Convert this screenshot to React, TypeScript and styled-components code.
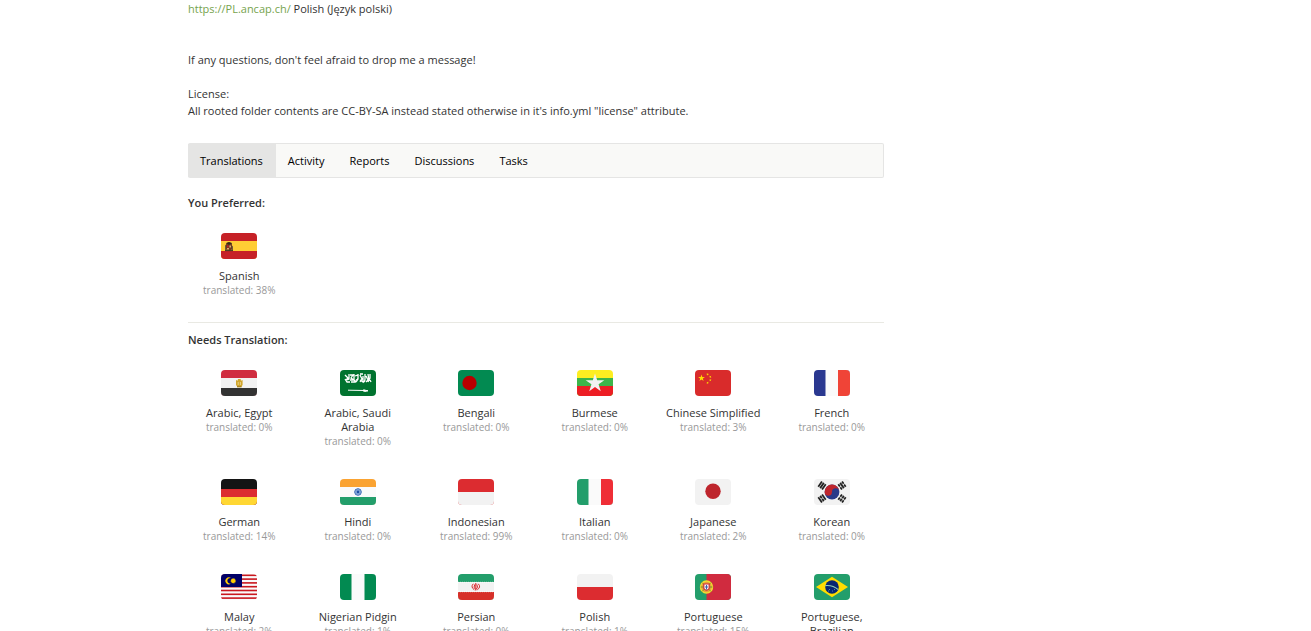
import React from "react";
import styled, { createGlobalStyle } from "styled-components";

const GlobalStyle = createGlobalStyle`
  body {
    margin: 0;
    background: #fff;
    color: #333;
    font: 11px/17px "Open Sans", "Noto Sans", sans-serif;
  }
`;

const Page = styled.div`
  max-width: 935px;
  margin: 0 auto;
  display: grid;
  grid-template-columns: minmax(0, 696px);
`;

const Main = styled.main`
  display: flex;
  flex-direction: column;
`;

const Description = styled.div`
  display: flex;
  flex-direction: column;
  gap: 17px;
  padding-bottom: 24px;
`;

const Paragraph = styled.p<{ $spaced?: boolean }>`
  margin: 0;
  padding-bottom: ${(p) => (p.$spaced ? "17px" : "0")};
`;

const SiteLink = styled.a`
  color: #76a34d;
  text-decoration: none;
`;

const TabBar = styled.nav`
  display: flex;
  background: #f9f9f7;
  border: 1px solid #e5e5e4;
  border-left: 0;
  border-radius: 2px;
`;

const Tab = styled.button<{ $active?: boolean }>`
  border: 0;
  margin: 0;
  padding: 8px 13px 8px 12px;
  font: inherit;
  color: #000;
  background: ${(p) => (p.$active ? "#e5e5e4" : "transparent")};
  cursor: pointer;
`;

const Section = styled.section<{ $divided?: boolean }>`
  padding: ${(p) => (p.$divided ? "8px 0 25px" : "16px 0 25px")};
  border-top: ${(p) => (p.$divided ? "1px solid #e9e9e3" : "0")};
`;

const SectionTitle = styled.h2`
  margin: 0 0 22px;
  font-size: 11px;
  line-height: 17px;
  font-weight: 600;
`;

const LanguageGrid = styled.ul`
  list-style: none;
  margin: 0;
  padding: 0 1px 0 0;
  display: grid;
  grid-template-columns: repeat(6, minmax(0, 1fr));
  column-gap: 16px;
  row-gap: 31px;
`;

const LanguageLink = styled.a`
  display: flex;
  flex-direction: column;
  align-items: center;
  padding: 0 2px;
  text-align: center;
  line-height: 14px;
  color: #333;
  text-decoration: none;
`;

const FlagFrame = styled.svg`
  width: 36px;
  height: 26px;
  margin-bottom: 10px;
  border-radius: 4px;
`;

const Progress = styled.span`
  font-size: 10px;
  color: #999;
`;

const Rows = ({ c, at }: { c: string[]; at: number[] }) => (
  <>
    {c.map((fill, i) => (
      <rect key={i} y={at[i]} width="36" height={26 - at[i]} fill={fill} />
    ))}
  </>
);

const Columns = ({ c, at }: { c: string[]; at: number[] }) => (
  <>
    {c.map((fill, i) => (
      <rect key={i} x={at[i]} width={36 - at[i]} height="26" fill={fill} />
    ))}
  </>
);

const star = (cx: number, cy: number, r: number, turn = 0, points = 5, inner = 0.382) =>
  Array.from({ length: points * 2 }, (_, i) => {
    const a = (Math.PI * i) / points - Math.PI / 2 + turn;
    const d = i % 2 ? r * inner : r;
    return `${cx + d * Math.cos(a)},${cy + d * Math.sin(a)}`;
  }).join(" ");

const Trigram = ({ x, y, turn, broken }: { x: number; y: number; turn: number; broken: number[] }) => (
  <g transform={`translate(${x} ${y}) rotate(${turn})`} stroke="#222" strokeWidth="1.8">
    {[-2.3, 0, 2.3].map((o, i) => (
      <path key={i} d={broken.includes(i) ? `M${o} -3.2v2.8M${o} 0.4v2.8` : `M${o} -3.2v6.4`} />
    ))}
  </g>
);

const flags: Record<string, React.ReactNode> = {
  Spanish: (
    <>
      <Rows c={["#c62127", "#ffcd34", "#c62127"]} at={[0, 8, 18]} />
      <path d="M4 17.5v-5l1-1 .3 6zM11 17.5v-5l1 1v4z" fill="#6b5a3a" />
      <path d="M5 12q0-3 3-3t3 3v4.5q-3 2.2-6 0z" fill="#6d3b20" />
      <path d="M5.6 10.4h5M8 9v3" stroke="#2f2818" />
      <path d="M6 12.5h1.6v2H6z" fill="#c62127" />
      <path d="M8.4 12.5h1.6v2H8.4zM6 15h2v1.4H6z" fill="#d9b06a" />
      <path d="M4 17.6h8" stroke="#3c3523" />
    </>
  ),
  "Arabic, Egypt": (
    <>
      <Rows c={["#d02d40", "#f2f2f2", "#333"]} at={[0, 8, 18]} />
      <path d="M15 10l1.600.800L17 9h2.600l.4 1.800L21.600 10v5l-1 1.200v1h-4.600v-1L15 15z" fill="#d1a62c" />
      <path d="M17.200 12v3M19.400 12v3" stroke="#f2e3b0" strokeWidth=".7" />
      <path d="M16 16.700h4.600" stroke="#8d6d16" strokeWidth=".7" />
    </>
  ),
  "Arabic, Saudi Arabia": (
    <>
      <rect width="36" height="26" fill="#00732f" />
      <path
        d="M5 5l3 3-2 2M5 9l2 3h3M9 4v5l-2 1M10 5h3l-2 3 3 2h-4M11 12h4M14 4v6l2 2M15 6l3-1v4l-2 1M18 4v4q-1 4-3 4M20 5l2 4-2 3M20 4h3M23 6v6l-3-2M25 4v5q0 3-2 3M26 6l2 4-2 2M28 4l1 7M30 4v4l-2 4M30 10l1 2"
        stroke="#fff"
        strokeWidth="1.300"
        fill="none"
      />
      <path d="M8 20.200l17 .3M25 20.200l3 .6-3 .6-1-.7zM24 19v3" stroke="#fff" strokeWidth="1" fill="#fff" />
    </>
  ),
  Bengali: (
    <>
      <rect width="36" height="26" fill="#028a51" />
      <circle cx="11.500" cy="13" r="7.200" fill="#b90000" />
    </>
  ),
  Burmese: (
    <>
      <Rows c={["#fdee21", "#3db54a", "#ed1d24"]} at={[0, 8, 16]} />
      <polygon points={star(18, 13.200, 9.800)} fill="#f2f2f2" />
    </>
  ),
  "Chinese Simplified": (
    <>
      <rect width="36" height="26" fill="#d92b2b" />
      <polygon points={star(6.500, 8, 3.600)} fill="#ffda00" />
      <g fill="#ffda00">
        <polygon points={star(12.600, 4.300, 1.400, 0.4)} />
        <polygon points={star(15.300, 6.800, 1.400, 0.8)} />
        <polygon points={star(15.300, 10.200, 1.400)} />
        <polygon points={star(12.600, 12.800, 1.400, 0.4)} />
      </g>
    </>
  ),
  French: <Columns c={["#2a3890", "#fafafa", "#f04437"]} at={[0, 11.500, 24]} />,
  German: <Rows c={["#141414", "#dc2c30", "#ffd733"]} at={[0, 10, 18]} />,
  Hindi: (
    <>
      <Rows c={["#faa332", "#fafafa", "#239e6b"]} at={[0, 8, 18]} />
      <circle cx="18" cy="13" r="3.300" fill="#b5cdea" stroke="#2a5cae" strokeWidth=".9" />
      <path d="M18 9.700v6.600M14.700 13h6.600M15.700 10.700l4.600 4.600M15.700 15.300l4.600-4.600" stroke="#4577c4" strokeWidth=".5" />
      <circle cx="18" cy="13" r="1.400" fill="#1d4fa5" />
    </>
  ),
  Indonesian: <Rows c={["#dc2c30", "#f2f2f2"]} at={[0, 13]} />,
  Italian: <Columns c={["#239e6b", "#fafafa", "#ef2e36"]} at={[0, 11.500, 24]} />,
  Japanese: (
    <>
      <rect width="36" height="26" fill="#f2f2f2" />
      <circle cx="18" cy="12.300" r="7.700" fill="#be252d" />
    </>
  ),
  Korean: (
    <>
      <rect width="36" height="26" fill="#f2f2f2" />
      <circle cx="18" cy="13" r="7.400" fill="#293989" />
      <path d="M10.600 13a7.400 7.400 0 0 1 14.800 0a3.700 3.700 0 0 0-7.400 0a3.700 3.700 0 0 1-7.400 0z" fill="#be252d" />
      <Trigram x={8} y={6.500} turn={35} broken={[]} />
      <Trigram x={28} y={6.500} turn={-35} broken={[0, 2]} />
      <Trigram x={8} y={19.500} turn={-35} broken={[1]} />
      <Trigram x={28} y={19.500} turn={35} broken={[0, 1, 2]} />
    </>
  ),
  Malay: (
    <>
      <rect width="36" height="26" fill="#fafafa" />
      {[0, 4, 8, 12, 16, 20, 24].map((y) => (
        <rect key={y} y={y * 0.95 + 0.5} width="36" height="1.600" fill="#c9181e" />
      ))}
      <rect width="21" height="13" fill="#010066" />
      <path d="M10 4a3.500 3.500 0 1 0 0 5.600a2.900 2.900 0 1 1 0-5.600z" fill="#fc0" />
      <polygon points={star(12.200, 6.800, 3, 0, 14, 0.65)} fill="#fc0" />
    </>
  ),
  "Nigerian Pidgin": <Columns c={["#028a51", "#fafafa", "#028a51"]} at={[0, 11.500, 24.500]} />,
  Persian: (
    <>
      <Rows c={["#239e6b", "#f2f2f2", "#d63029"]} at={[0, 8, 18]} />
      <path d="M0 8.300h36M0 17.700h36" stroke="#fff" strokeDasharray="1 1" strokeWidth=".8" />
      <path d="M15.300 9.800q-3 3.200 1 6M20.300 9.800q3 3.200-1 6M16.800 10.400q-1.700 3 .6 5M18.800 10.400q1.700 3-.6 5M17.800 9v7.500" stroke="#d9252a" fill="none" />
    </>
  ),
  Polish: <Rows c={["#f2f2f2", "#dc2c30"]} at={[0, 13]} />,
  Portuguese: (
    <>
      <Columns c={["#239e6b", "#d02b3f"]} at={[0, 11.500]} />
      <circle cx="11.500" cy="13" r="6" fill="#e8a33b" stroke="#f5dc30" strokeWidth="1.400" />
      <path d="M7 8.500l9 9M16 8.500l-9 9M5.500 13h12" stroke="#5a8b2c" strokeWidth=".8" />
      <path d="M8.300 9.400h6.400v5q-3.200 4.800-6.400 0z" fill="#d02b3f" />
      <path d="M9.400 10.500h4.200v3.800q-2.100 2.800-4.200 0z" fill="#fafafa" />
      <path d="M11.500 11v4.500M10 13h3" stroke="#3b62a8" />
    </>
  ),
  "Portuguese, Brazilian": (
    <>
      <rect width="36" height="26" fill="#239e6b" />
      <path d="M2 13L18 2.700L34 13L18 23.300z" fill="#fd0" />
      <circle cx="18" cy="13" r="6.800" fill="#062672" />
      <path d="M11.300 11.600q7.500-.7 13 4" stroke="#8fd0b5" strokeWidth="1.200" fill="none" />
      <path d="M15 15.500h1M18 17h1M20 15.500h1M14 17h1" stroke="#7fa0cf" strokeWidth=".7" />
    </>
  ),
};

type Entry = { name: string; percent: number };

const preferred: Entry[] = [{ name: "Spanish", percent: 38 }];

const pending: Entry[] = [
  { name: "Arabic, Egypt", percent: 0 },
  { name: "Arabic, Saudi Arabia", percent: 0 },
  { name: "Bengali", percent: 0 },
  { name: "Burmese", percent: 0 },
  { name: "Chinese Simplified", percent: 3 },
  { name: "French", percent: 0 },
  { name: "German", percent: 14 },
  { name: "Hindi", percent: 0 },
  { name: "Indonesian", percent: 99 },
  { name: "Italian", percent: 0 },
  { name: "Japanese", percent: 2 },
  { name: "Korean", percent: 0 },
  { name: "Malay", percent: 2 },
  { name: "Nigerian Pidgin", percent: 1 },
  { name: "Persian", percent: 0 },
  { name: "Polish", percent: 1 },
  { name: "Portuguese", percent: 15 },
  { name: "Portuguese, Brazilian", percent: 0 },
];

const tabs = ["Translations", "Activity", "Reports", "Discussions", "Tasks"];

const LanguageList = ({ items }: { items: Entry[] }) => (
  <LanguageGrid>
    {items.map(({ name, percent }) => (
      <li key={name}>
        <LanguageLink href="#">
          <FlagFrame viewBox="0 0 36 26" aria-hidden="true">
            {flags[name]}
          </FlagFrame>
          <span>{name}</span>
          <Progress>translated: {percent}%</Progress>
        </LanguageLink>
      </li>
    ))}
  </LanguageGrid>
);

export default function App() {
  return (
    <>
      <GlobalStyle />
      <Page>
        <Main>
          <Description>
            <Paragraph $spaced>
              <SiteLink href="#">https://PL.ancap.ch/</SiteLink> Polish (Język polski)
            </Paragraph>
            <Paragraph>If any questions, don't feel afraid to drop me a message!</Paragraph>
            <Paragraph>
              License:
              <br />
              All rooted folder contents are CC-BY-SA instead stated otherwise in it's info.yml "license" attribute.
            </Paragraph>
          </Description>
          <TabBar>
            {tabs.map((tab, i) => (
              <Tab key={tab} type="button" $active={i === 0}>
                {tab}
              </Tab>
            ))}
          </TabBar>
          <Section>
            <SectionTitle>You Preferred:</SectionTitle>
            <LanguageList items={preferred} />
          </Section>
          <Section $divided>
            <SectionTitle>Needs Translation:</SectionTitle>
            <LanguageList items={pending} />
          </Section>
        </Main>
      </Page>
    </>
  );
}
